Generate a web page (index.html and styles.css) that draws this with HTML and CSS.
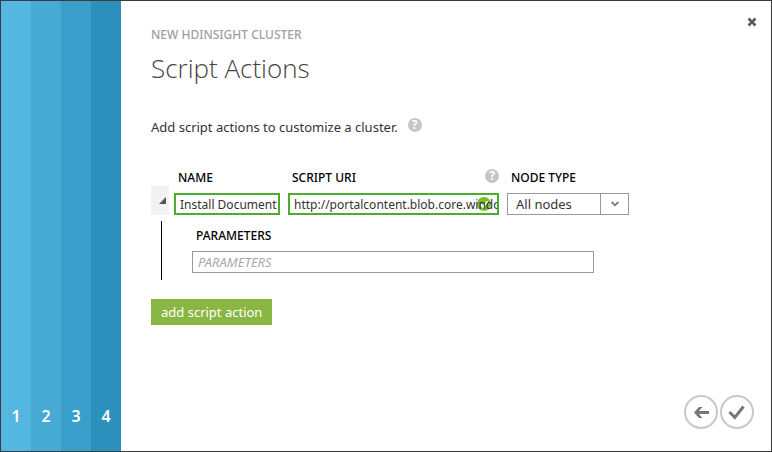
FILE: index.html
```html
<!DOCTYPE html>
<html lang="en">
<head>
<meta charset="utf-8">
<meta name="viewport" content="width=device-width, initial-scale=1">
<title>New HDInsight Cluster</title>
<link rel="stylesheet" href="styles.css">
</head>
<body>
<div class="wizard">
  <ol class="steps">
    <li class="step step-1">1</li>
    <li class="step step-2">2</li>
    <li class="step step-3">3</li>
    <li class="step step-4">4</li>
  </ol>
  <main class="panel">
    <button class="close" type="button" aria-label="Close">
      <svg width="10" height="10" viewBox="0 0 10 10"><path d="M1.500 1.500l7 7M8.500 1.500l-7 7" fill="none" stroke="#5a5a5a" stroke-width="2.600"/></svg>
    </button>
    <header>
      <p class="eyebrow">NEW HDINSIGHT CLUSTER</p>
      <h1 class="title">Script Actions</h1>
    </header>
    <p class="intro">Add script actions to customize a cluster.
      <button class="help" type="button" aria-label="Help">?</button>
    </p>
    <form class="actions">
      <div class="row">
        <button class="toggle" type="button" aria-label="Collapse">
          <svg width="7" height="7" viewBox="0 0 7 7"><path d="M7 0v7H0z" fill="#555"/></svg>
        </button>
        <div class="field field-name">
          <label class="label" for="name">NAME</label>
          <input class="input valid" id="name" type="text" value="Install Document">
        </div>
        <div class="field field-uri">
          <div class="label-line">
            <label class="label" for="uri">SCRIPT URI</label>
            <button class="help" type="button" aria-label="Help">?</button>
          </div>
          <div class="control">
            <svg class="tick" width="14" height="14" viewBox="0 0 14 14"><circle cx="7" cy="7" r="7" fill="#7abf2f"/><path d="M3.500 7.200l2.600 2.600 4.600-5.300" fill="none" stroke="#fff" stroke-width="2"/></svg>
            <input class="input valid" id="uri" type="text" value="http://portalcontent.blob.core.windows.net">
          </div>
        </div>
        <div class="field field-node">
          <label class="label" for="node">NODE TYPE</label>
          <div class="control">
            <select class="input select" id="node"><option>All nodes</option></select>
            <span class="arrow"><svg width="8" height="6" viewBox="0 0 8 6"><path d="M.7 1l3.300 3.300L7.300 1" fill="none" stroke="#777" stroke-width="1.800"/></svg></span>
          </div>
        </div>
      </div>
      <div class="params">
        <label class="label" for="params">PARAMETERS</label>
        <input class="input" id="params" type="text" placeholder="PARAMETERS">
      </div>
      <button class="add" type="button">add script action</button>
    </form>
    <nav class="nav">
      <button class="round" type="button" aria-label="Back">
        <svg width="34" height="34" viewBox="0 0 34 34"><circle cx="17" cy="17" r="16" fill="none" stroke="#c8c8c8" stroke-width="2"/><path d="M25 17.500H12.500" fill="none" stroke="#777" stroke-width="3"/><path d="M18.500 12h-3.500l-5 5.500 5 5.500h3.500l-5-5.500z" fill="#777"/></svg>
      </button>
      <button class="round" type="button" aria-label="Finish">
        <svg width="34" height="34" viewBox="0 0 34 34"><circle cx="17" cy="17" r="16" fill="none" stroke="#c8c8c8" stroke-width="2"/><path d="M9.500 17l5.300 5.500L23.500 11.500" fill="none" stroke="#777" stroke-width="3"/></svg>
      </button>
    </nav>
  </main>
</div>
</body>
</html>
```
FILE: styles.css
```css
* {
  box-sizing: border-box;
}

body {
  margin: 0;
  font-family: "Noto Sans", "Open Sans", sans-serif;
  font-size: 13px;
  line-height: 18px;
  color: #333;
}

button {
  padding: 0;
  border: 0;
  background: none;
  font: inherit;
}

svg {
  display: block;
}

p,
h1,
ol {
  margin: 0;
  padding: 0;
}

.wizard {
  display: flex;
  min-height: 100vh;
  border: 1px solid #3c3c3f;
  background: #fff;
}

.steps {
  display: flex;
  list-style: none;
}

.step {
  display: flex;
  align-items: flex-end;
  justify-content: center;
  width: 30px;
  padding-bottom: 26px;
  font-size: 16px;
  font-weight: 600;
  color: #fff;
}

.step-1 { background: #53b7e1; }
.step-2 { background: #46aad5; }
.step-3 { background: #399ec9; }
.step-4 { background: #2b90bc; }

.panel {
  position: relative;
  display: flex;
  flex: 1;
  flex-direction: column;
  padding: 25px 17px 22px 30px;
}

.close {
  position: absolute;
  top: 16px;
  right: 14px;
}

.eyebrow {
  font-size: 12px;
  font-weight: 500;
  color: #a0a0a0;
}

.title {
  margin-top: 6px;
  font-family: "Open Sans", sans-serif;
  font-size: 26px;
  font-weight: 300;
  line-height: 36px;
  color: #444;
}

.intro {
  display: flex;
  gap: 10px;
  margin-top: 32px;
}

.help {
  width: 14px;
  height: 14px;
  border-radius: 50%;
  background: #c6c6c6;
  font-size: 12px;
  font-weight: 700;
  line-height: 14px;
  color: #fff;
}

.actions {
  margin-top: 33px;
}

.row {
  display: flex;
  align-items: flex-end;
  gap: 8px;
}

.toggle {
  display: flex;
  align-items: center;
  justify-content: flex-end;
  width: 18px;
  height: 29px;
  margin-right: -3px;
  padding-right: 3px;
  background: #f2f2f2;
}

.field-name { width: 106px; }
.field-uri { width: 211px; }
.field-node { width: 122px; }

.label {
  display: block;
  padding: 0 4px 6px;
  font-size: 12px;
  font-weight: 500;
  color: #000;
}

.label-line {
  display: flex;
  justify-content: space-between;
}

.control {
  position: relative;
}

.input {
  position: relative;
  display: block;
  width: 100%;
  height: 22px;
  padding: 0 0 0 5px;
  border: 1px solid #999;
  border-radius: 0;
  outline: 0;
  background: transparent;
  font: inherit;
  color: #333;
}

.input::placeholder {
  font-style: italic;
  color: #aaa;
}

.valid {
  padding-left: 4px;
  border: 2px solid #4bac2f;
  font-size: 12px;
}

.tick {
  position: absolute;
  top: 4px;
  right: 8px;
}

.select {
  padding-left: 8px;
  appearance: none;
}

.arrow {
  position: absolute;
  top: 0;
  right: 0;
  display: flex;
  align-items: center;
  justify-content: center;
  width: 29px;
  height: 22px;
  border-left: 1px solid #999;
  pointer-events: none;
}

.params {
  max-width: 433px;
  margin: 6px 0 19px 10px;
  padding: 6px 0 7px 30px;
  border-left: 1px solid #000;
}

.add {
  height: 26px;
  padding: 0 10px;
  background: #8ab644;
  color: #fff;
}

.nav {
  display: flex;
  justify-content: flex-end;
  gap: 2px;
  margin-top: auto;
}
```
